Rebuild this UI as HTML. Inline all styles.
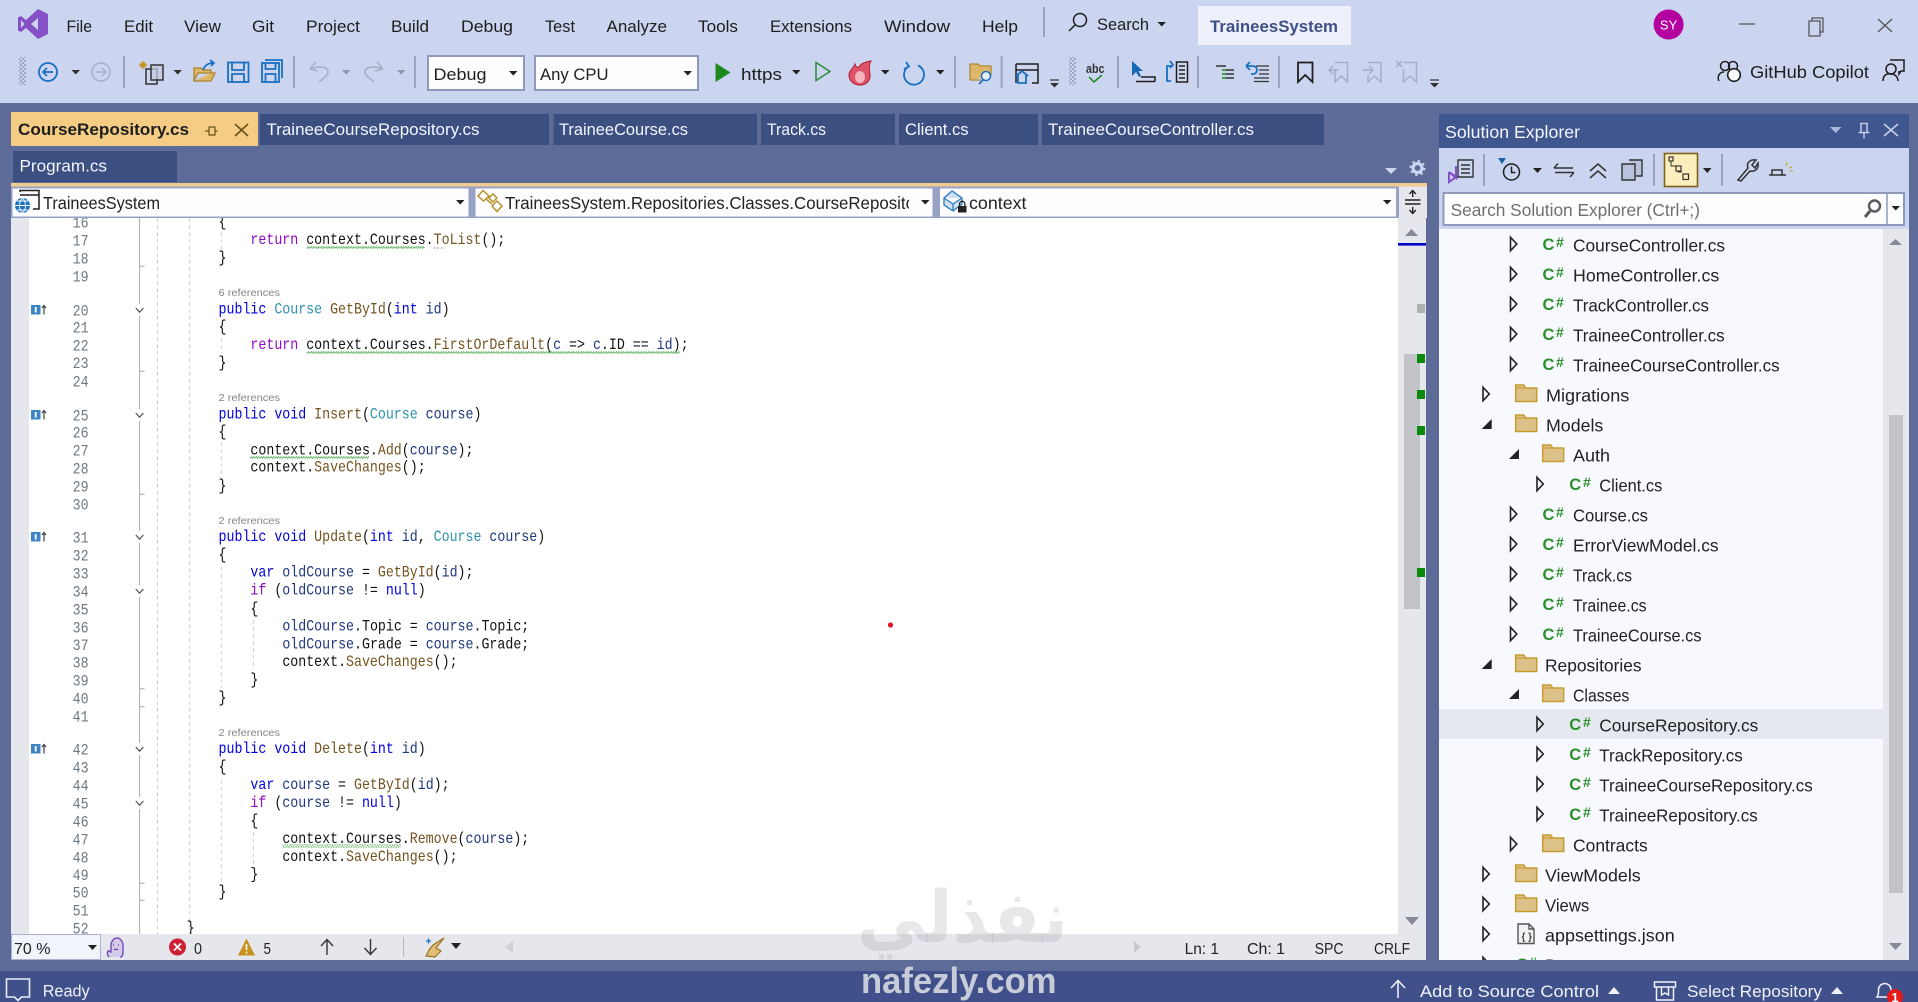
<!DOCTYPE html>
<html lang="en"><head><meta charset="utf-8"><title>TraineesSystem - Visual Studio</title>
<style>
html,body{margin:0;padding:0;background:#ccd5f0;overflow:hidden}
svg{display:block;font-family:"Liberation Sans",sans-serif;filter:blur(.35px)}
text{white-space:pre}
.mn{font-size:17px;fill:#1e1e1e}
.tb{font-size:17px;fill:#1e1e1e}
.tab{font-size:17px;fill:#f3f5ff}
.co{font-family:"Liberation Mono",monospace;font-size:15.5px;fill:#111}
.num{font-family:"Liberation Mono",monospace;font-size:15.5px;fill:#6e7880;text-anchor:end}
.k{fill:#0000e0}.c{fill:#8f08c4}.t{fill:#2b91af}.m{fill:#74531f}.v{fill:#1f377f}
.ref{font-size:10.5px;fill:#858585}
.tr{font-size:17.5px;fill:#222}
.cs{font-weight:bold;fill:#2c8f2c;font-size:16.5px}
.sh{font-weight:bold;fill:#2c8f2c;font-size:14px}
.st{font-size:17px;fill:#f0f2fb}
.eb{font-size:16px;fill:#222}
.sep{stroke:#9aa4c2;stroke-width:2}
.ic{fill:none;stroke:#1e1e1e;stroke-width:1.5}
.bl{fill:none;stroke:#1a70c0;stroke-width:1.8}
.gy{fill:none;stroke:#a7aec6;stroke-width:1.5}
</style></head><body>
<svg xmlns="http://www.w3.org/2000/svg" width="1918" height="1002" viewBox="0 0 1918 1002">
<defs>
<pattern id="dots" width="4" height="4" patternUnits="userSpaceOnUse"><circle cx="1" cy="1" r=".9" fill="#7d88aa"/><circle cx="3" cy="3" r=".9" fill="#7d88aa"/></pattern>
<pattern id="sq" width="5" height="3" patternUnits="userSpaceOnUse"><path d="M0 2.5 L1.25 .5 L2.5 2.5 L3.75 .5 L5 2.5" fill="none" stroke="#62b562" stroke-width=".8"/></pattern>
<path id="ex" d="M0 -6.7 L6.3 0 L0 6.7Z" fill="none" stroke="#222" stroke-width="1.6"/>
<path id="dn" d="M9 -5 V5 H-1 Z" fill="#222"/>
<g id="fd"><path d="M0 16.5 V0 H8 L10 3 H21 V16.5Z" fill="#dcc188" stroke="#c99a2e" stroke-width="1.5"/><path d="M0 3 H10" stroke="#c99a2e" stroke-width="1.2"/></g>
<path id="chev" d="M-3.8 -2 L0 2.2 L3.8 -2" fill="none" stroke="#555" stroke-width="1.2"/>
<g id="gut"><rect x="0" y="0" width="9.5" height="9.5" fill="#3d85c6"/><rect x="3.8" y="2" width="1.8" height="5.5" fill="#fff"/><path d="M13 9.5 V1 M11 3 L13 .5 L15 3" fill="none" stroke="#444" stroke-width="1.2"/></g>
<clipPath id="treeclip"><rect x="1439" y="229" width="444" height="731"/></clipPath>
<clipPath id="c2clip"><rect x="476" y="188" width="433" height="29"/></clipPath>
</defs>

<!-- base -->
<rect width="1918" height="1002" fill="#5d6b99"/>
<rect width="1918" height="103" fill="#ccd5f0"/>

<!-- logo -->
<path d="M38 9 L48 14 V34 L38 39 L26 28 L21 32 L18 30.5 V17.5 L21 16 L26 20 Z" fill="#8651c7"/>
<path d="M21 20 V28 L24.5 24 Z M38 18 L31 24 L38 30 Z" fill="#ccd5f0"/>

<!-- menu -->
<text class="mn" x="66.5" y="32" textLength="25.5" lengthAdjust="spacingAndGlyphs">File</text>
<text class="mn" x="124" y="32" textLength="29" lengthAdjust="spacingAndGlyphs">Edit</text>
<text class="mn" x="184" y="32" textLength="37" lengthAdjust="spacingAndGlyphs">View</text>
<text class="mn" x="252" y="32" textLength="22" lengthAdjust="spacingAndGlyphs">Git</text>
<text class="mn" x="306" y="32" textLength="54" lengthAdjust="spacingAndGlyphs">Project</text>
<text class="mn" x="391" y="32" textLength="38" lengthAdjust="spacingAndGlyphs">Build</text>
<text class="mn" x="461" y="32" textLength="52" lengthAdjust="spacingAndGlyphs">Debug</text>
<text class="mn" x="545" y="32" textLength="30" lengthAdjust="spacingAndGlyphs">Test</text>
<text class="mn" x="606.5" y="32" textLength="60.5" lengthAdjust="spacingAndGlyphs">Analyze</text>
<text class="mn" x="698" y="32" textLength="40" lengthAdjust="spacingAndGlyphs">Tools</text>
<text class="mn" x="770" y="32" textLength="82" lengthAdjust="spacingAndGlyphs">Extensions</text>
<text class="mn" x="884" y="32" textLength="66" lengthAdjust="spacingAndGlyphs">Window</text>
<text class="mn" x="982" y="32" textLength="36" lengthAdjust="spacingAndGlyphs">Help</text>
<line class="sep" x1="1044" y1="7" x2="1044" y2="37"/>
<circle cx="1080" cy="20" r="6.5" class="ic"/><path d="M1075 25 L1069 31" class="ic"/>
<text class="mn" x="1097" y="30" textLength="52" lengthAdjust="spacingAndGlyphs">Search</text>
<path d="M1157.5 22 h8.5 l-4.25 4.5z" fill="#222"/>
<rect x="1198" y="6" width="153" height="39" fill="#eef1fb"/>
<text x="1210" y="32" font-size="17" font-weight="bold" fill="#3f4f85" textLength="128" lengthAdjust="spacingAndGlyphs">TraineesSystem</text>
<circle cx="1668.6" cy="24.5" r="15" fill="#b4009e"/>
<text x="1668.6" y="29.5" font-size="13" fill="#fff" text-anchor="middle">SY</text>
<path d="M1739 24 H1755" stroke="#555" stroke-width="1.3"/>
<path d="M1809 21 h11 v15 h-11z M1812 21 v-3 h11 v14 h-3" fill="none" stroke="#555" stroke-width="1.3"/>
<path d="M1878 19 L1892 32 M1892 19 L1878 32" stroke="#555" stroke-width="1.3"/>

<!-- toolbar -->
<rect x="19" y="57" width="7" height="28" fill="url(#dots)"/>
<circle cx="48" cy="72" r="9" class="bl"/><path d="M53 72 H43 M47 68 L43 72 L47 76" class="bl"/>
<path d="M71.5 70 h8.5 l-4.25 4.5z" fill="#333"/>
<circle cx="101" cy="72" r="9" class="gy"/><path d="M96 72 H106 M102 68 L106 72 L102 76" class="gy"/>
<line class="sep" x1="124" y1="56" x2="124" y2="88"/>
<path d="M143 61 v8 M139 65 h8 M140.5 62.5 l5 5 M145.5 62.5 l-5 5" stroke="#c8921a" stroke-width="1.4"/>
<rect x="146" y="69" width="11" height="15" fill="none" stroke="#333" stroke-width="1.5"/>
<rect x="151" y="65" width="12" height="15" fill="#c3cbe0" fill-opacity=".7" stroke="#333" stroke-width="1.5"/>
<path d="M173.5 70 h8.5 l-4.25 4.5z" fill="#333"/>
<path d="M194 81 V68 h7 l2 2 h8 v3 h-13 l-4 8 h17 l4 -8 h-4" fill="#dcb76a" stroke="#ac842a" stroke-width="1.3"/>
<path d="M203 70 C205 65 209 63 213 63 M210 60 l4 3 -3 3" class="bl"/>
<rect x="228" y="62.5" width="20.5" height="19.5" class="bl"/><path d="M232 63 v7 h12 v-7 M232 82 v-8 h12 v8" class="bl"/>
<path d="M265 60 h17 v18" class="bl" stroke-width="1.2"/>
<rect x="262" y="63" width="17" height="19" class="bl"/><path d="M265.5 63 v6 h10 v-6 M265.5 82 v-8 h10 v8" class="bl"/>
<line class="sep" x1="294" y1="56" x2="294" y2="88"/>
<path d="M310 69 L316 62 M310 69 L318 71 M310 69 C318 66 328 66 328 72 C328 76 322 79 319 82" class="gy"/>
<path d="M342 70 h8.5 l-4.25 4.5z" fill="#8f96ad"/>
<path d="M383 69 L377 62 M383 69 L375 71 M383 69 C375 66 365 66 365 72 C365 76 371 79 374 82" class="gy"/>
<path d="M397 70 h8.5 l-4.25 4.5z" fill="#8f96ad"/>
<line class="sep" x1="415" y1="56" x2="415" y2="88"/>
<rect x="428" y="56" width="96" height="34" fill="#fdfdff" stroke="#8f99b8" stroke-width="2"/>
<text class="tb" x="433.5" y="80" textLength="53" lengthAdjust="spacingAndGlyphs">Debug</text>
<path d="M509 71 h8.5 l-4.25 4.5z" fill="#222"/>
<rect x="535" y="56" width="163" height="34" fill="#fdfdff" stroke="#8f99b8" stroke-width="2"/>
<text class="tb" x="540" y="80" textLength="68.5" lengthAdjust="spacingAndGlyphs">Any CPU</text>
<path d="M683.5 71 h8.5 l-4.25 4.5z" fill="#222"/>
<path d="M715.5 63 L730.5 72.5 L715.5 82Z" fill="#1e8a1e"/>
<text class="tb" x="741" y="80" textLength="41" lengthAdjust="spacingAndGlyphs">https</text>
<path d="M792 70 h8.5 l-4.25 4.5z" fill="#222"/>
<path d="M816 62.5 L830 71.5 L816 80.5Z" fill="none" stroke="#2e8b3d" stroke-width="1.5"/>
<path d="M860 85 C853 85 849 80 849 75 C849 70 853 69 855 64 C856 68 858 68 860 66 C861 64 865 62 871 61 C868 65 870 70 870 76 C870 81 866 85 860 85Z" fill="#e0526a" stroke="#b01c2e" stroke-width="1"/>
<ellipse cx="860" cy="77" rx="5" ry="6" fill="#f4b5bb"/>
<path d="M881 70 h8.5 l-4.25 4.5z" fill="#222"/>
<path d="M909 66 A10 10 0 1 0 918 65.5 M906 62 L909 66.5 L904 69" class="bl"/>
<path d="M936 70 h8.5 l-4.25 4.5z" fill="#222"/>
<line class="sep" x1="955" y1="56" x2="955" y2="88"/>
<path d="M970 80 V64 h8 l2 2 h11 v10 M970 80 h11" fill="#dcb76a" stroke="#b08a2e" stroke-width="1.3"/>
<circle cx="986" cy="76" r="4.5" fill="#e6ecf8" stroke="#1a70c0" stroke-width="1.5"/><path d="M983 80 L979 84" class="bl"/>
<line class="sep" x1="1001.6" y1="56" x2="1001.6" y2="88"/>
<path d="M1016 64 h22 v19 h-6 M1016 83 v-19 M1016 70 h22" class="ic"/>
<path d="M1016 76 L1022 71 L1028 76 M1018 75 v8 h8 v-8" class="bl" fill="#cfe0f5"/>
<path d="M1050 80 h9" stroke="#333" stroke-width="1.2"/><path d="M1050 83 h9 l-4.5 4.5z" fill="#333"/>
<rect x="1069" y="57" width="7" height="28" fill="url(#dots)"/>
<text x="1086" y="73" font-size="13" font-weight="bold" fill="#333" textLength="18.5" lengthAdjust="spacingAndGlyphs">abc</text>
<path d="M1089 77 L1094 82 L1102 75" fill="none" stroke="#1e8a1e" stroke-width="1.5"/>
<line class="sep" x1="1118" y1="56" x2="1118" y2="88"/>
<path d="M1132 61 V76 L1136 72 L1139 77 L1141 76 L1138.5 71 L1143 71Z" fill="#1569b3"/>
<path d="M1136 81.5 h19 M1141 77 h14 v4.5" class="ic"/>
<path d="M1172 66 h-5 v15 h4" class="bl"/><path d="M1170 61 l3 4 -3 3" class="bl" stroke-width="1"/>
<path d="M1176.5 62 h11 v20 h-11z M1179 66 h6 M1179 70 h6 M1179 74 h6 M1179 78 h6" class="ic"/>
<line class="sep" x1="1198" y1="56" x2="1198" y2="88"/>
<path d="M1216 66 h10 M1226 70 h8 M1226 74 h8 M1226 78 h8" stroke="#333" stroke-width="1.4" fill="none"/>
<path d="M1222 70 h4 M1222 74 h4 M1222 78 h4" stroke="#1e8a1e" stroke-width="1.4"/>
<path d="M1246 66 l4 -4 M1246 66 l4 4 M1246 66 h7 a4 4 0 0 1 0 8 h-2" class="bl"/>
<path d="M1256 66 h13 M1259 70 h10 M1259 74 h10 M1254 78 h15 M1254 81.5 h15" stroke="#333" stroke-width="1.3" fill="none"/>
<line class="sep" x1="1279" y1="56" x2="1279" y2="88"/>
<path d="M1298 62.5 h14.5 v19.5 l-7.25 -7 l-7.25 7z" fill="none" stroke="#1e1e1e" stroke-width="1.8"/>
<path d="M1335 62.5 h12.5 v19.5 l-6.25 -6 l-6.25 6 v-12 M1329 70 h9 M1333 66 l-4 4 4 4" class="gy"/>
<path d="M1368 62.5 h13 v19.5 l-6.5 -6 l-6.5 6 v-7 M1362 70 h11 M1369 66 l4 4 -4 4" class="gy"/>
<path d="M1404 62.5 h12.5 v19.5 l-6.5 -6 l-6.5 6 v-13 M1396 61 l6 6 M1402 61 l-6 6" class="gy"/>
<path d="M1430 80 h9" stroke="#333" stroke-width="1.2"/><path d="M1430 83 h9 l-4.5 4.5z" fill="#333"/>
<circle cx="1725" cy="66" r="4.5" class="ic" stroke-width="1.8"/><circle cx="1733" cy="66" r="4.5" class="ic" stroke-width="1.8"/>
<path d="M1719 81 c-2 -4 0 -9 5 -9" class="ic" stroke-width="1.8"/>
<circle cx="1734" cy="75" r="6.3" fill="#fff" stroke="#1e1e1e" stroke-width="1.6"/>
<text x="1750" y="78" font-size="17.5" fill="#1e1e1e" textLength="119" lengthAdjust="spacingAndGlyphs">GitHub Copilot</text>
<circle cx="1891" cy="69" r="5" class="ic"/><path d="M1883 81 c0 -6 4 -8 8 -7 c4 0 7 3 7 7 M1890 60 h14 v11 h-3 l-2 3 v-3" class="ic"/>

<!-- tabs -->
<rect x="11" y="112" width="247" height="34" fill="#f5cc84"/>
<text x="18" y="135" font-size="17" font-weight="bold" fill="#1e1e1e" textLength="171" lengthAdjust="spacingAndGlyphs">CourseRepository.cs</text>
<path d="M205 131 h4 M209 126.5 v9 M209 127 h6 v8 h-6 M215 131 h2.5" fill="none" stroke="#6a5518" stroke-width="1.2"/>
<path d="M235 124 L248 136 M248 124 L235 136" stroke="#6a5518" stroke-width="1.7"/>
<rect x="260" y="114" width="289" height="31" fill="#3b4f81"/>
<text class="tab" x="266.5" y="135" textLength="213" lengthAdjust="spacingAndGlyphs">TraineeCourseRepository.cs</text>
<rect x="553.5" y="114" width="203.5" height="31" fill="#3b4f81"/>
<text class="tab" x="559" y="135" textLength="129" lengthAdjust="spacingAndGlyphs">TraineeCourse.cs</text>
<rect x="761" y="114" width="134" height="31" fill="#3b4f81"/>
<text class="tab" x="767" y="135" textLength="59" lengthAdjust="spacingAndGlyphs">Track.cs</text>
<rect x="899" y="114" width="139" height="31" fill="#3b4f81"/>
<text class="tab" x="905" y="135" textLength="63.5" lengthAdjust="spacingAndGlyphs">Client.cs</text>
<rect x="1042" y="114" width="282" height="31" fill="#3b4f81"/>
<text class="tab" x="1048" y="135" textLength="206" lengthAdjust="spacingAndGlyphs">TraineeCourseController.cs</text>
<rect x="13" y="151" width="164" height="31" fill="#3b4f81"/>
<text class="tab" x="19.5" y="171.5" textLength="87.5" lengthAdjust="spacingAndGlyphs">Program.cs</text>
<path d="M1385 168 h12 l-6 6z" fill="#ccd5f0"/>
<circle cx="1417.5" cy="168" r="4.5" fill="none" stroke="#ccd5f0" stroke-width="3.2"/>
<circle cx="1417.5" cy="168" r="7" fill="none" stroke="#ccd5f0" stroke-width="2" stroke-dasharray="2.2 3.3"/>

<!-- editor -->
<rect x="11" y="218" width="18" height="716" fill="#e6e7ed"/>
<rect x="29" y="218" width="1369" height="716" fill="#fff"/>
<rect x="1398" y="218" width="28" height="742" fill="#e6e7ed"/>

<!-- guides -->
<path d="M139.6 218 V934" stroke="#a8a8a8" stroke-width="1"/>
<path d="M139.6 266.3 h5 M139.6 371.3 h5 M139.6 494.3 h5 M139.6 688.7 h5 M139.6 706.7 h5 M139.6 883.3 h5 M139.6 900.3 h5" stroke="#a8a8a8" stroke-width="1"/>
<path d="M157.5 218 V934 M189.6 218 V934 M221.3 232 V250 M221.3 338 V353 M221.3 442 V477 M221.3 567 V688 M221.3 780 V883 M253.4 620 V670 M253.4 832 V867" stroke="#cfcfcf" stroke-width="1" stroke-dasharray="4 3"/>
<g fill="#fff">
<rect x="133" y="304" width="13" height="12"/><rect x="133" y="409" width="13" height="12"/><rect x="133" y="531" width="13" height="12"/><rect x="133" y="585" width="13" height="12"/><rect x="133" y="743" width="13" height="12"/><rect x="133" y="797" width="13" height="12"/>
</g>
<use href="#chev" x="139.6" y="310"/><use href="#chev" x="139.6" y="415"/><use href="#chev" x="139.6" y="537"/><use href="#chev" x="139.6" y="591"/><use href="#chev" x="139.6" y="749"/><use href="#chev" x="139.6" y="803"/>
<use href="#gut" x="31" y="305"/><use href="#gut" x="31" y="410"/><use href="#gut" x="31" y="532"/><use href="#gut" x="31" y="744"/>

<!-- line numbers -->
<g transform="translate(88.6,0) scale(.857,1)">
<text class="num" y="227.7">16</text><text class="num" y="245.7">17</text><text class="num" y="263.7">18</text><text class="num" y="281.3">19</text>
<text class="num" y="315.7">20</text><text class="num" y="332.7">21</text><text class="num" y="350.3">22</text><text class="num" y="368">23</text><text class="num" y="386.7">24</text>
<text class="num" y="420.7">25</text><text class="num" y="437.7">26</text><text class="num" y="455.7">27</text><text class="num" y="473.7">28</text><text class="num" y="491.7">29</text><text class="num" y="509.7">30</text>
<text class="num" y="542.7">31</text>
</g>
<g transform="translate(88.6,0) scale(.857,1)">
<text class="num" y="560.7">32</text><text class="num" y="578.3">33</text><text class="num" y="596.7">34</text><text class="num" y="614.7">35</text><text class="num" y="632.3">36</text><text class="num" y="650">37</text><text class="num" y="667.7">38</text><text class="num" y="685.7">39</text><text class="num" y="703.3">40</text><text class="num" y="721.7">41</text>
<text class="num" y="754.3">42</text><text class="num" y="772.7">43</text><text class="num" y="790.7">44</text><text class="num" y="808.7">45</text><text class="num" y="826.7">46</text><text class="num" y="844.3">47</text><text class="num" y="862.3">48</text><text class="num" y="880">49</text><text class="num" y="897.3">50</text><text class="num" y="915.3">51</text><text class="num" y="933.3">52</text>
</g>

<!-- code -->
<g transform="translate(154.8,0) scale(.857,1)">
<text class="co" x="74.4" y="226">{</text>
<text class="co" x="111.6" y="244"><tspan class="c">return</tspan> context.Courses.<tspan class="m">ToList</tspan>();</text>
<text class="co" x="74.4" y="262">}</text>
<text class="co" x="74.4" y="313.7"><tspan class="k">public</tspan> <tspan class="t">Course</tspan> <tspan class="m">GetById</tspan>(<tspan class="k">int</tspan> <tspan class="v">id</tspan>)</text>
<text class="co" x="74.4" y="331">{</text>
<text class="co" x="111.6" y="349"><tspan class="c">return</tspan> context.Courses.<tspan class="m">FirstOrDefault</tspan>(<tspan class="v">c</tspan> =&gt; <tspan class="v">c</tspan>.ID == <tspan class="v">id</tspan>);</text>
<text class="co" x="74.4" y="367">}</text>
<text class="co" x="74.4" y="418.7"><tspan class="k">public</tspan> <tspan class="k">void</tspan> <tspan class="m">Insert</tspan>(<tspan class="t">Course</tspan> <tspan class="v">course</tspan>)</text>
<text class="co" x="74.4" y="436">{</text>
<text class="co" x="111.6" y="454.5">context.Courses.<tspan class="m">Add</tspan>(<tspan class="v">course</tspan>);</text>
<text class="co" x="111.6" y="471.7">context.<tspan class="m">SaveChanges</tspan>();</text>
<text class="co" x="74.4" y="490">}</text>
<text class="co" x="74.4" y="541"><tspan class="k">public</tspan> <tspan class="k">void</tspan> <tspan class="m">Update</tspan>(<tspan class="k">int</tspan> <tspan class="v">id</tspan>, <tspan class="t">Course</tspan> <tspan class="v">course</tspan>)</text>
<text class="co" x="74.4" y="559">{</text>
<text class="co" x="111.6" y="576.5"><tspan class="k">var</tspan> <tspan class="v">oldCourse</tspan> = <tspan class="m">GetById</tspan>(<tspan class="v">id</tspan>);</text>
<text class="co" x="111.6" y="594.5"><tspan class="c">if</tspan> (<tspan class="v">oldCourse</tspan> != <tspan class="k">null</tspan>)</text>
<text class="co" x="111.6" y="613">{</text>
<text class="co" x="148.8" y="630.5"><tspan class="v">oldCourse</tspan>.Topic = <tspan class="v">course</tspan>.Topic;</text>
<text class="co" x="148.8" y="648.5"><tspan class="v">oldCourse</tspan>.Grade = <tspan class="v">course</tspan>.Grade;</text>
<text class="co" x="148.8" y="666">context.<tspan class="m">SaveChanges</tspan>();</text>
<text class="co" x="111.6" y="684">}</text>
<text class="co" x="74.4" y="702">}</text>
<text class="co" x="74.4" y="753"><tspan class="k">public</tspan> <tspan class="k">void</tspan> <tspan class="m">Delete</tspan>(<tspan class="k">int</tspan> <tspan class="v">id</tspan>)</text>
<text class="co" x="74.4" y="771">{</text>
<text class="co" x="111.6" y="789"><tspan class="k">var</tspan> <tspan class="v">course</tspan> = <tspan class="m">GetById</tspan>(<tspan class="v">id</tspan>);</text>
<text class="co" x="111.6" y="807"><tspan class="c">if</tspan> (<tspan class="v">course</tspan> != <tspan class="k">null</tspan>)</text>
<text class="co" x="111.6" y="825">{</text>
<text class="co" x="148.8" y="843">context.Courses.<tspan class="m">Remove</tspan>(<tspan class="v">course</tspan>);</text>
<text class="co" x="148.8" y="861">context.<tspan class="m">SaveChanges</tspan>();</text>
<text class="co" x="111.6" y="878.5">}</text>
<text class="co" x="74.4" y="896">}</text>
<text class="co" x="37.2" y="932">}</text>
</g>
<text class="ref" x="218.5" y="296" textLength="61.5" lengthAdjust="spacingAndGlyphs">6 references</text>
<text class="ref" x="218.5" y="401" textLength="61.5" lengthAdjust="spacingAndGlyphs">2 references</text>
<text class="ref" x="218.5" y="524" textLength="61.5" lengthAdjust="spacingAndGlyphs">2 references</text>
<text class="ref" x="218.5" y="736" textLength="61.5" lengthAdjust="spacingAndGlyphs">2 references</text>
<rect x="306.7" y="246" width="118" height="3" fill="url(#sq)"/>
<path d="M434 248 h11" stroke="#999" stroke-width="1.2" stroke-dasharray="1.5 2"/>
<rect x="306.7" y="351" width="373" height="3" fill="url(#sq)"/>
<rect x="250" y="456" width="119" height="3" fill="url(#sq)"/>
<rect x="282.4" y="844.5" width="118.5" height="3" fill="url(#sq)"/>
<circle cx="890.5" cy="625" r="2.6" fill="#e81123"/>

<!-- editor scrollbar -->
<path d="M1405 236 L1411.5 229 L1418 236Z" fill="#868999"/>
<rect x="1398" y="243" width="28" height="2.6" fill="#0000c0"/>
<rect x="1404" y="354" width="16" height="255" fill="#c2c3c9"/>
<rect x="1417" y="304" width="8" height="9" fill="#b0b0b0"/>
<rect x="1417" y="354" width="8" height="9" fill="#0a8a0a"/><rect x="1417" y="390" width="8" height="9" fill="#0a8a0a"/><rect x="1417" y="426" width="8" height="9" fill="#0a8a0a"/><rect x="1417" y="568" width="8" height="9" fill="#0a8a0a"/>
<path d="M1405 917 L1419 917 L1412 925Z" fill="#868999"/>

<!-- orange line + nav bar -->
<rect x="11" y="183" width="1416" height="3.5" fill="#efcb8e"/>
<rect x="11" y="186.5" width="1416" height="31.5" fill="#97a2c4"/>
<rect x="12.5" y="188.5" width="456" height="28" fill="#fdfdff"/>
<rect x="475.5" y="188.5" width="457" height="28" fill="#fdfdff"/>
<rect x="940" y="188.5" width="456" height="28" fill="#fdfdff"/>
<rect x="1399" y="186.5" width="28" height="31.5" fill="#e6e7ed"/>
<path d="M20 192 V190.5 H39 V209 H33 M20 195 H39" class="ic" stroke-width="1.3"/>
<circle cx="22.5" cy="205.5" r="7.5" fill="#1a70c0"/>
<path d="M15 205.5 h15 M22.5 198 c-4 4 -4 11 0 15 M22.5 198 c4 4 4 11 0 15 M17 201 h11 M17 210 h11" stroke="#fff" stroke-width=".9" fill="none"/>
<text x="43" y="209" font-size="17.5" fill="#222" textLength="117" lengthAdjust="spacingAndGlyphs">TraineesSystem</text>
<path d="M456 200 h8.5 l-4.25 4.5z" fill="#222"/>
<path d="M478 196 L483 190.5 L489 196 L483.5 201Z M489 198 L493 194 L497 198 L493 202Z M492 206 L497 201 L502 206 L497 211.5Z M486 199 L492 204" fill="none" stroke="#b8912a" stroke-width="1.5"/>
<g clip-path="url(#c2clip)"><text x="505" y="209" font-size="17.5" fill="#222" textLength="424" lengthAdjust="spacingAndGlyphs">TraineesSystem.Repositories.Classes.CourseRepository</text></g>
<path d="M921 200 h8.5 l-4.25 4.5z" fill="#222"/>
<path d="M944 198 L952 191 L962 198 L962 204 L953 211 L944 205Z M944 198 L953 204 L962 198 M953 204 V211" fill="#cfe2f5" stroke="#2c7cc0" stroke-width="1.3"/>
<rect x="958" y="206" width="8.5" height="6.5" fill="#222"/><path d="M959.5 206 v-2 a2.7 2.7 0 0 1 5.4 0 v2" fill="none" stroke="#222" stroke-width="1.3"/>
<text x="969" y="209" font-size="17.5" fill="#222" textLength="57.5" lengthAdjust="spacingAndGlyphs">context</text>
<path d="M1383 200 h8.5 l-4.25 4.5z" fill="#222"/>
<path d="M1405 200 h15.5 M1405 204 h15.5 M1412.7 197 v-6 M1412.7 207 v6" stroke="#222" stroke-width="1.4"/>
<path d="M1409.5 194 l3.2 -3.5 3.2 3.5 M1409.5 210 l3.2 3.5 3.2 -3.5" fill="none" stroke="#222" stroke-width="1.3"/>

<!-- editor bottom bar -->
<rect x="11" y="934" width="1415" height="26" fill="#e6e7ed"/>
<rect x="11.5" y="934.5" width="89" height="25" fill="#f2f4fc" stroke="#a8b2d0" stroke-width="1"/>
<text class="eb" x="14" y="954" textLength="36.5" lengthAdjust="spacingAndGlyphs">70 %</text>
<path d="M88 945 h9 l-4.5 5z" fill="#222"/>
<path d="M109 957 c-2 -2 -2 -4 -1 -6 c1 -1 2 1 3 1 l0 -6 c0 -5 3 -8 6 -8 c3 0 6 3 6 8 v6 c0 3 -1 5 -3 5 M113 945 h1 M118 945 h1 M114 950 c1 -1 3 -1 4 0" fill="#c8b8e8" fill-opacity=".6" stroke="#7a52b8" stroke-width="1.5"/>
<circle cx="177.5" cy="947" r="8.5" fill="#cf1f33"/>
<path d="M174 943.5 L181 950.5 M181 943.5 L174 950.5" stroke="#fff" stroke-width="1.8"/>
<text class="eb" x="194" y="954" textLength="8" lengthAdjust="spacingAndGlyphs">0</text>
<path d="M246.5 938.5 L255 955.5 H238 Z" fill="#c8901f"/><path d="M246.5 944 v6 M246.5 951.5 v2" stroke="#fff" stroke-width="1.6"/>
<text class="eb" x="263.5" y="954" textLength="7.5" lengthAdjust="spacingAndGlyphs">5</text>
<path d="M327 955 V940 M321 946 L327 939.5 L333 946" fill="none" stroke="#333" stroke-width="1.4"/>
<path d="M370.5 939 V954 M364.5 948 L370.5 954.5 L376.5 948" fill="none" stroke="#333" stroke-width="1.4"/>
<line x1="403.6" y1="937" x2="403.6" y2="957" stroke="#b5b5bb" stroke-width="1"/>
<path d="M444 938 L436 948 L441 951 L435 957 L426 956 L429 950 L433 945Z" fill="#e0be78" stroke="#9a7420" stroke-width="1.2"/>
<path d="M426 941 h5 M428.5 938.5 v5" stroke="#1a70c0" stroke-width="1.3"/>
<path d="M451 943 h10 l-5 6z" fill="#222"/>
<path d="M513 941 V953 L505 947Z" fill="#d0d1d7"/>
<path d="M1134 941 V953 L1141 947Z" fill="#c8c9cf"/>
<text class="eb" x="1184.6" y="954" textLength="34.4" lengthAdjust="spacingAndGlyphs">Ln: 1</text>
<text class="eb" x="1247" y="954" textLength="38" lengthAdjust="spacingAndGlyphs">Ch: 1</text>
<text class="eb" x="1314.6" y="954" textLength="29" lengthAdjust="spacingAndGlyphs">SPC</text>
<text class="eb" x="1374" y="954" textLength="36" lengthAdjust="spacingAndGlyphs">CRLF</text>

<!-- solution explorer -->
<rect x="1439" y="114" width="470" height="34" fill="#40568f"/>
<text x="1445" y="138" font-size="17.5" fill="#f3f5ff" textLength="135" lengthAdjust="spacingAndGlyphs">Solution Explorer</text>
<path d="M1830 127 h11.5 l-5.75 6z" fill="#a9b6d8"/>
<path d="M1860 123.5 h8 M1861 123.5 v9 h6 v-9 M1858.5 132.5 h11 M1864 132.5 v6" fill="none" stroke="#c3cde8" stroke-width="1.5"/>
<path d="M1884 124 L1898 136 M1898 124 L1884 136" stroke="#c3cde8" stroke-width="1.7"/>
<rect x="1439" y="148" width="470" height="81" fill="#ccd5f0"/>
<path d="M1449 172 L1458 178 M1449 172 V182 L1456 177 M1449 172 l7 6 v-12" fill="none" stroke="#8651c7" stroke-width="2"/>
<path d="M1458 160 h15 v17 h-15z M1461 165 h9 M1461 169 h9 M1461 173 h9" fill="#ccd5f0" stroke="#333" stroke-width="1.4"/>
<line class="sep" x1="1484" y1="154" x2="1484" y2="186"/>
<path d="M1498 158 h8 l-4 6z" fill="#1a62a8"/>
<circle cx="1511.5" cy="172" r="8" class="ic"/><path d="M1511.5 166.5 v6 h4" class="ic" stroke-width="1.2"/>
<path d="M1533 168 h9 l-4.5 5z" fill="#222"/>
<path d="M1554 168 h19 M1558 163.5 l-4 4.5 M1574 172.5 h-19 M1570 177 l4 -4.5" fill="none" stroke="#333" stroke-width="1.4"/>
<path d="M1590 171 l8 -7 8 7 M1590 178 l8 -7 8 7" fill="none" stroke="#333" stroke-width="1.5"/>
<path d="M1629 160 h13 v16 h-6 M1622 164 h13 v16 h-13z" fill="#b9c3de" stroke="#333" stroke-width="1.4"/>
<line class="sep" x1="1654" y1="154" x2="1654" y2="186"/>
<rect x="1664.5" y="153.5" width="33" height="33" fill="#fdeebd" stroke="#7f6016" stroke-width="1.6"/>
<path d="M1671 160 v6 h7 v6 h4" fill="none" stroke="#333" stroke-width="1"/>
<rect x="1669" y="157" width="4" height="4" fill="#fdeebd" stroke="#333" stroke-width="1.2"/><rect x="1676" y="166" width="5" height="5" fill="#fdeebd" stroke="#333" stroke-width="1.2"/><rect x="1683" y="174" width="5.5" height="5.5" fill="#fdeebd" stroke="#333" stroke-width="1.2"/>
<path d="M1703 168 h8.5 l-4.25 5z" fill="#222"/>
<line class="sep" x1="1722" y1="154" x2="1722" y2="186"/>
<path d="M1738 180 L1748 168 C1746 163 1750 159 1756 160 L1752 165 L1755 168 L1758 163 C1759 169 1755 172 1750 171 L1741 181Z" fill="#ccd5f0" stroke="#333" stroke-width="1.5"/>
<path d="M1769 175 h17 M1772 175 v-5 h10 v5" fill="none" stroke="#333" stroke-width="1.5"/>
<path d="M1787 162 l-1 4 M1792 167 l-3 1 M1790 171 h3" stroke="#b8b030" stroke-width="1.2"/>
<rect x="1443.5" y="193" width="460.5" height="32" fill="#fdfdff" stroke="#8e99bb" stroke-width="2"/>
<text x="1450.6" y="216" font-size="17.5" fill="#6f6f6f" textLength="249.4" lengthAdjust="spacingAndGlyphs">Search Solution Explorer (Ctrl+;)</text>
<circle cx="1874.5" cy="206" r="5.5" fill="none" stroke="#5a5a5a" stroke-width="2.4"/><path d="M1870 211 L1865 217" stroke="#5a5a5a" stroke-width="3"/>
<line x1="1887" y1="193" x2="1887" y2="225" stroke="#8e99bb" stroke-width="1.5"/>
<path d="M1891.5 206 h8.5 l-4.25 4.5z" fill="#222"/>

<rect x="1439" y="229" width="444" height="731" fill="#f8f9fe"/>
<rect x="1883" y="229" width="26" height="731" fill="#e6e7ed"/>
<rect x="1889" y="415" width="14" height="478" fill="#c2c3c9"/>
<path d="M1889 245 L1895.5 239 L1902 245Z" fill="#868999"/>
<path d="M1889 943 L1902 943 L1895.5 950Z" fill="#868999"/>
<rect x="1439" y="709" width="444" height="30" fill="#e6e8f0"/>

<!-- tree -->
<g clip-path="url(#treeclip)">
<use href="#ex" x="1510.5" y="244"/><text class="cs" x="1542.5" y="250">C</text><text class="sh" x="1556" y="247">#</text><text class="tr" x="1573" y="251.7" textLength="152" lengthAdjust="spacingAndGlyphs">CourseController.cs</text>
<use href="#ex" x="1510.5" y="274"/><text class="cs" x="1542.5" y="280">C</text><text class="sh" x="1556" y="277">#</text><text class="tr" x="1573" y="281.7" textLength="146.3" lengthAdjust="spacingAndGlyphs">HomeController.cs</text>
<use href="#ex" x="1510.5" y="304"/><text class="cs" x="1542.5" y="310">C</text><text class="sh" x="1556" y="307">#</text><text class="tr" x="1573" y="311.7" textLength="136" lengthAdjust="spacingAndGlyphs">TrackController.cs</text>
<use href="#ex" x="1510.5" y="334"/><text class="cs" x="1542.5" y="340">C</text><text class="sh" x="1556" y="337">#</text><text class="tr" x="1573" y="341.7" textLength="151.7" lengthAdjust="spacingAndGlyphs">TraineeController.cs</text>
<use href="#ex" x="1510.5" y="364"/><text class="cs" x="1542.5" y="370">C</text><text class="sh" x="1556" y="367">#</text><text class="tr" x="1573" y="371.7" textLength="206.7" lengthAdjust="spacingAndGlyphs">TraineeCourseController.cs</text>
<use href="#ex" x="1483" y="394"/><use href="#fd" x="1515.7" y="385"/><text class="tr" x="1546" y="401.7" textLength="83.3" lengthAdjust="spacingAndGlyphs">Migrations</text>
<use href="#dn" x="1482.7" y="424"/><use href="#fd" x="1515.7" y="415"/><text class="tr" x="1546" y="431.7" textLength="57.3" lengthAdjust="spacingAndGlyphs">Models</text>
<use href="#dn" x="1510" y="454"/><use href="#fd" x="1542.7" y="445"/><text class="tr" x="1573" y="461.7" textLength="37" lengthAdjust="spacingAndGlyphs">Auth</text>
<use href="#ex" x="1537" y="484"/><text class="cs" x="1569.3" y="490">C</text><text class="sh" x="1583" y="487">#</text><text class="tr" x="1599.3" y="491.7" textLength="63" lengthAdjust="spacingAndGlyphs">Client.cs</text>
<use href="#ex" x="1510.5" y="514"/><text class="cs" x="1542.5" y="520">C</text><text class="sh" x="1556" y="517">#</text><text class="tr" x="1573" y="521.7" textLength="75" lengthAdjust="spacingAndGlyphs">Course.cs</text>
<use href="#ex" x="1510.5" y="544"/><text class="cs" x="1542.5" y="550">C</text><text class="sh" x="1556" y="547">#</text><text class="tr" x="1573" y="551.7" textLength="145.6" lengthAdjust="spacingAndGlyphs">ErrorViewModel.cs</text>
<use href="#ex" x="1510.5" y="574"/><text class="cs" x="1542.5" y="580">C</text><text class="sh" x="1556" y="577">#</text><text class="tr" x="1573" y="581.7" textLength="59" lengthAdjust="spacingAndGlyphs">Track.cs</text>
<use href="#ex" x="1510.5" y="604"/><text class="cs" x="1542.5" y="610">C</text><text class="sh" x="1556" y="607">#</text><text class="tr" x="1573" y="611.7" textLength="73.6" lengthAdjust="spacingAndGlyphs">Trainee.cs</text>
<use href="#ex" x="1510.5" y="634"/><text class="cs" x="1542.5" y="640">C</text><text class="sh" x="1556" y="637">#</text><text class="tr" x="1573" y="641.7" textLength="128.5" lengthAdjust="spacingAndGlyphs">TraineeCourse.cs</text>
<use href="#dn" x="1482.7" y="664"/><use href="#fd" x="1515.7" y="655"/><text class="tr" x="1545" y="671.7" textLength="96.6" lengthAdjust="spacingAndGlyphs">Repositories</text>
<use href="#dn" x="1510" y="694"/><use href="#fd" x="1542.7" y="685"/><text class="tr" x="1573" y="701.7" textLength="56.3" lengthAdjust="spacingAndGlyphs">Classes</text>
<use href="#ex" x="1537" y="724"/><text class="cs" x="1569.3" y="730">C</text><text class="sh" x="1583" y="727">#</text><text class="tr" x="1599.3" y="731.7" textLength="159" lengthAdjust="spacingAndGlyphs">CourseRepository.cs</text>
<use href="#ex" x="1537" y="754"/><text class="cs" x="1569.3" y="760">C</text><text class="sh" x="1583" y="757">#</text><text class="tr" x="1599.3" y="761.7" textLength="143.4" lengthAdjust="spacingAndGlyphs">TrackRepository.cs</text>
<use href="#ex" x="1537" y="784"/><text class="cs" x="1569.3" y="790">C</text><text class="sh" x="1583" y="787">#</text><text class="tr" x="1599.3" y="791.7" textLength="213.4" lengthAdjust="spacingAndGlyphs">TraineeCourseRepository.cs</text>
<use href="#ex" x="1537" y="814"/><text class="cs" x="1569.3" y="820">C</text><text class="sh" x="1583" y="817">#</text><text class="tr" x="1599.3" y="821.7" textLength="158.4" lengthAdjust="spacingAndGlyphs">TraineeRepository.cs</text>
<use href="#ex" x="1510.5" y="844"/><use href="#fd" x="1542.7" y="835"/><text class="tr" x="1573" y="851.7" textLength="74.7" lengthAdjust="spacingAndGlyphs">Contracts</text>
<use href="#ex" x="1483" y="874"/><use href="#fd" x="1515.7" y="865"/><text class="tr" x="1545" y="881.7" textLength="95.7" lengthAdjust="spacingAndGlyphs">ViewModels</text>
<use href="#ex" x="1483" y="904"/><use href="#fd" x="1515.7" y="895"/><text class="tr" x="1545" y="911.7" textLength="44.3" lengthAdjust="spacingAndGlyphs">Views</text>
<use href="#ex" x="1483" y="934"/>
<path d="M1518 924 h11 l5 5 v14.5 h-16z M1529 924 v5 h5" fill="#f2f2f4" stroke="#555" stroke-width="1.4"/>
<text x="1521.5" y="940" font-size="10" font-weight="bold" fill="#444">{ }</text>
<text class="tr" x="1545" y="941.7" textLength="129.7" lengthAdjust="spacingAndGlyphs">appsettings.json</text>
<use href="#ex" x="1483" y="964"/><text class="cs" x="1516" y="970">C</text><text class="sh" x="1529" y="967">#</text><text class="tr" x="1545" y="971.7" textLength="84" lengthAdjust="spacingAndGlyphs">Program.cs</text>
</g>

<!-- status bar -->
<rect x="0" y="971" width="1918" height="31" fill="#40508a"/>
<path d="M6.5 979 h23 v18 h-8 l-3.5 3.5 l-3.5 -3.5 h-8z" fill="none" stroke="#e8ecf8" stroke-width="1.6"/>
<text class="st" x="42.7" y="996.5" textLength="47" lengthAdjust="spacingAndGlyphs">Ready</text>
<path d="M1398 998 V981 M1391 988 L1398 980.5 L1405 988" fill="none" stroke="#f0f2fb" stroke-width="1.5"/>
<text class="st" x="1420" y="997" textLength="179" lengthAdjust="spacingAndGlyphs">Add to Source Control</text>
<path d="M1608 994 h12 l-6 -7z" fill="#f0f2fb"/>
<path d="M1654.5 982 h21 v5 h-21z M1656.5 987 v13 h17 v-13 M1661.5 987 v8 l3.5 -2 l3.5 2 v-8" fill="none" stroke="#f0f2fb" stroke-width="1.5"/>
<text class="st" x="1687" y="997" textLength="135" lengthAdjust="spacingAndGlyphs">Select Repository</text>
<path d="M1831 994 h12 l-6 -7z" fill="#f0f2fb"/>
<path d="M1877 997 c2 -3 1.5 -5 1.5 -8 a6.3 6.3 0 0 1 12.5 0 c0 3 0 5 2 8z" fill="none" stroke="#f0f2fb" stroke-width="1.5"/>
<circle cx="1895" cy="997" r="8" fill="#e21a1a"/>
<text x="1895" y="1002" font-size="13" fill="#fff" text-anchor="middle" font-weight="bold">1</text>

<!-- watermark -->
<text x="1068" y="942" font-family="'DejaVu Sans',sans-serif" font-weight="bold" font-size="72" fill="#8c8c96" fill-opacity=".2" direction="rtl" textLength="211" lengthAdjust="spacingAndGlyphs">نفذلي</text>
<text x="861" y="993" font-size="36" font-weight="bold" fill="#c8ccd8" textLength="195.5" lengthAdjust="spacingAndGlyphs">nafezly.com</text>
</svg>
</body></html>
